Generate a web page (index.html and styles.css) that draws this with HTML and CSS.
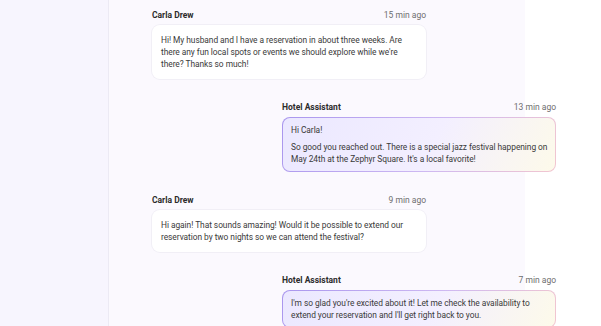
FILE: index.html
```html
<!DOCTYPE html>
<html lang="en">
<head>
    <meta charset="UTF-8">
    <meta name="viewport" content="width=device-width, initial-scale=1.0">
    <title>Guest Chat</title>
    <link rel="stylesheet" href="styles.css">
</head>
<body>
    <div class="layout">
        <aside class="sidebar"></aside>

        <main class="chat">
            <div class="thread">
                <div class="message guest">
                    <div class="meta">
                        <span class="author">Carla Drew</span>
                        <span class="time">15 min ago</span>
                    </div>
                    <div class="bubble">
                        <p>Hi! My husband and I have a reservation in about three weeks. Are there any fun local spots or events we should explore while we're there? Thanks so much!</p>
                    </div>
                </div>

                <div class="message assistant">
                    <div class="meta">
                        <span class="author">Hotel Assistant</span>
                        <span class="time">13 min ago</span>
                    </div>
                    <div class="bubble">
                        <p>Hi Carla!</p>
                        <p>So good you reached out. There is a special jazz festival happening on May 24th at the Zephyr Square. It's a local favorite!</p>
                    </div>
                </div>

                <div class="message guest">
                    <div class="meta">
                        <span class="author">Carla Drew</span>
                        <span class="time">9 min ago</span>
                    </div>
                    <div class="bubble">
                        <p>Hi again! That sounds amazing! Would it be possible to extend our reservation by two nights so we can attend the festival?</p>
                    </div>
                </div>

                <div class="message assistant">
                    <div class="meta">
                        <span class="author">Hotel Assistant</span>
                        <span class="time">7 min ago</span>
                    </div>
                    <div class="bubble">
                        <p>I'm so glad you're excited about it! Let me check the availability to extend your reservation and I'll get right back to you.</p>
                    </div>
                </div>
            </div>
        </main>
    </div>
</body>
</html>
```

FILE: styles.css
```css
* {
    box-sizing: border-box;
}
body {
    margin: 0;
    background-color: #ffffff;
    font-family: Roboto, "Noto Sans", sans-serif;
    color: #333333;
    overflow: hidden;
}
p {
    margin: 0;
}
.layout {
    display: flex;
    height: 100vh;
}
.sidebar {
    width: 109px;
    flex-shrink: 0;
    background-color: #f7f5fe;
    border-right: 1px solid #eceaf4;
}
.chat {
    flex: 1;
    padding: 9px 45px 0 43px;
    background: linear-gradient(to right, #fbf9fe 0, #fbf9fe 416px, #ffffff 416px);
}
.thread {
    display: flex;
    flex-direction: column;
    gap: 22px;
}
.message {
    width: 274px;
    display: flex;
    flex-direction: column;
    gap: 3px;
}
.message.assistant {
    align-self: flex-end;
}
.meta {
    display: flex;
    justify-content: space-between;
    align-items: baseline;
    line-height: 13px;
}
.author {
    font-size: 8.5px;
    font-weight: 700;
    color: #2b2b2b;
}
.time {
    font-size: 8.5px;
    color: #6e6e6e;
}
.bubble {
    border-radius: 8px;
    font-size: 8.4px;
    line-height: 12px;
    letter-spacing: -0.05px;
    color: #3a3a3a;
    padding: 9px;
    display: flex;
    flex-direction: column;
    gap: 5px;
}
.guest .bubble {
    background-color: #ffffff;
    box-shadow: 0 0 0 1px #f1eff6;
}
.assistant .bubble {
    padding: 6px 5px 6px 8px;
    border: 1px solid transparent;
    background:
        linear-gradient(115deg, #ebe8ff 0%, #f3efff 55%, #fdfaea 100%) padding-box,
        linear-gradient(115deg, #a996ee 0%, #cdb8f2 55%, #f2c6cf 100%) border-box;
}
```
